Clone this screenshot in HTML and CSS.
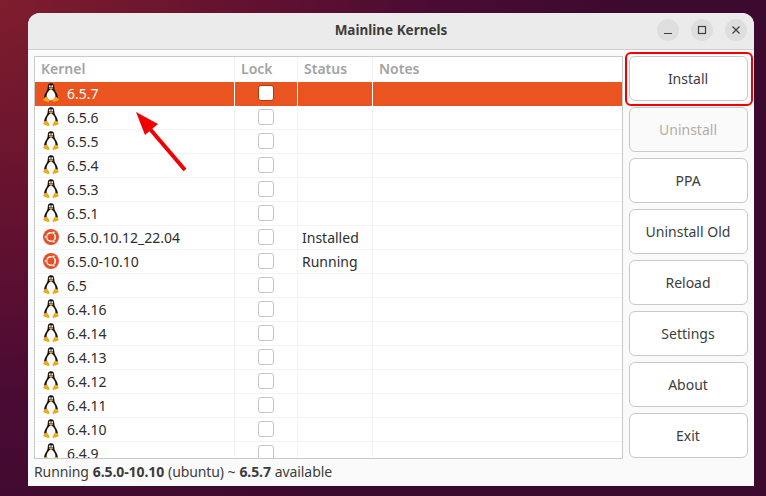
FILE: index.html
```html
<!DOCTYPE html>
<html lang="en">
<head>
  <meta charset="UTF-8">
  <title>Mainline Kernels</title>
  <link rel="stylesheet" href="styles.css">
</head>
<body>

  <svg class="defs" width="0" height="0">
    <symbol id="tux" viewBox="0 0 16 20">
      <path d="M8 0.3C5.4 0.3 4.6 2.4 4.7 4.6C4.8 6.6 3.8 7.8 2.8 9.4C1.7 11.1 1.1 12.8 1.3 14.8L14.7 14.8C14.9 12.8 14.3 11.1 13.2 9.4C12.2 7.8 11.2 6.6 11.3 4.6C11.4 2.4 10.6 0.3 8 0.3Z" fill="#141414"/>
      <path d="M8 6.4C6 7 3.6 10 3.6 13C3.6 15.6 5.6 17.2 8 17.2C10.4 17.2 12.4 15.6 12.4 13C12.4 10 10 7 8 6.4Z" fill="#fff"/>
      <ellipse cx="6.8" cy="3.3" rx="0.9" ry="1.1" fill="#fff"/>
      <ellipse cx="9.2" cy="3.3" rx="0.9" ry="1.1" fill="#fff"/>
      <path d="M6 4.9C7 4.3 9 4.3 10 4.9C9.5 6 8.7 6.5 8 6.5C7.3 6.5 6.5 6 6 4.9Z" fill="#f0a81c"/>
      <path d="M3.2 13.4C1.8 14.6 0.8 15.6 0.2 16.6C0 17.2 0.4 17.5 1.5 17.8C3 18.2 4.6 19.2 5.6 19C6.4 18.8 6.6 17.8 6.2 16.8C5.7 15.6 4.6 14 3.2 13.4Z" fill="#f0a81c"/>
      <path d="M12.8 13.4C14.2 14.6 15.2 15.6 15.8 16.6C16 17.2 15.6 17.5 14.5 17.8C13 18.2 11.4 19.2 10.4 19C9.6 18.8 9.4 17.8 9.8 16.8C10.3 15.6 11.4 14 12.8 13.4Z" fill="#f0a81c"/>
    </symbol>
    <symbol id="ubuntu" viewBox="0 0 16 16">
      <circle cx="8" cy="8" r="8" fill="#e2512a"/>
      <circle cx="8" cy="8" r="4.3" fill="none" stroke="#fff" stroke-width="1.6"/>
      <circle cx="3" cy="8" r="1.5" fill="#fff" stroke="#e2512a" stroke-width="0.7"/>
      <circle cx="10.5" cy="3.7" r="1.5" fill="#fff" stroke="#e2512a" stroke-width="0.7"/>
      <circle cx="10.5" cy="12.3" r="1.5" fill="#fff" stroke="#e2512a" stroke-width="0.7"/>
    </symbol>
  </svg>

  <div class="window">
    <header class="titlebar">
      <span class="title">Mainline Kernels</span>
      <div class="win-controls">
        <span class="win-btn"><svg width="12" height="12" viewBox="0 0 12 12"><path d="M2 9.5H10" stroke="#3d3d3d" stroke-width="1.2"/></svg></span>
        <span class="win-btn"><svg width="12" height="12" viewBox="0 0 12 12"><rect x="2.5" y="2.5" width="7" height="7" fill="none" stroke="#3d3d3d" stroke-width="1.2"/></svg></span>
        <span class="win-btn"><svg width="12" height="12" viewBox="0 0 12 12"><path d="M2.5 2.5L9.5 9.5M9.5 2.5L2.5 9.5" stroke="#3d3d3d" stroke-width="1.2"/></svg></span>
      </div>
    </header>

    <div class="content">
      <div class="list">
        <div class="row head">
          <div class="cell">Kernel</div>
          <div class="cell">Lock</div>
          <div class="cell">Status</div>
          <div class="cell">Notes</div>
        </div>
        <div class="row selected">
          <div class="cell"><svg class="icon"><use href="#tux"/></svg>6.5.7</div>
          <div class="cell lock"><span class="check"></span></div>
          <div class="cell"></div>
          <div class="cell"></div>
        </div>
        <div class="row">
          <div class="cell"><svg class="icon"><use href="#tux"/></svg>6.5.6</div>
          <div class="cell lock"><span class="check"></span></div>
          <div class="cell"></div>
          <div class="cell"></div>
        </div>
        <div class="row">
          <div class="cell"><svg class="icon"><use href="#tux"/></svg>6.5.5</div>
          <div class="cell lock"><span class="check"></span></div>
          <div class="cell"></div>
          <div class="cell"></div>
        </div>
        <div class="row">
          <div class="cell"><svg class="icon"><use href="#tux"/></svg>6.5.4</div>
          <div class="cell lock"><span class="check"></span></div>
          <div class="cell"></div>
          <div class="cell"></div>
        </div>
        <div class="row">
          <div class="cell"><svg class="icon"><use href="#tux"/></svg>6.5.3</div>
          <div class="cell lock"><span class="check"></span></div>
          <div class="cell"></div>
          <div class="cell"></div>
        </div>
        <div class="row">
          <div class="cell"><svg class="icon"><use href="#tux"/></svg>6.5.1</div>
          <div class="cell lock"><span class="check"></span></div>
          <div class="cell"></div>
          <div class="cell"></div>
        </div>
        <div class="row">
          <div class="cell"><svg class="icon round"><use href="#ubuntu"/></svg>6.5.0.10.12_22.04</div>
          <div class="cell lock"><span class="check"></span></div>
          <div class="cell state">Installed</div>
          <div class="cell"></div>
        </div>
        <div class="row">
          <div class="cell"><svg class="icon round"><use href="#ubuntu"/></svg>6.5.0-10.10</div>
          <div class="cell lock"><span class="check"></span></div>
          <div class="cell state">Running</div>
          <div class="cell"></div>
        </div>
        <div class="row">
          <div class="cell"><svg class="icon"><use href="#tux"/></svg>6.5</div>
          <div class="cell lock"><span class="check"></span></div>
          <div class="cell"></div>
          <div class="cell"></div>
        </div>
        <div class="row">
          <div class="cell"><svg class="icon"><use href="#tux"/></svg>6.4.16</div>
          <div class="cell lock"><span class="check"></span></div>
          <div class="cell"></div>
          <div class="cell"></div>
        </div>
        <div class="row">
          <div class="cell"><svg class="icon"><use href="#tux"/></svg>6.4.14</div>
          <div class="cell lock"><span class="check"></span></div>
          <div class="cell"></div>
          <div class="cell"></div>
        </div>
        <div class="row">
          <div class="cell"><svg class="icon"><use href="#tux"/></svg>6.4.13</div>
          <div class="cell lock"><span class="check"></span></div>
          <div class="cell"></div>
          <div class="cell"></div>
        </div>
        <div class="row">
          <div class="cell"><svg class="icon"><use href="#tux"/></svg>6.4.12</div>
          <div class="cell lock"><span class="check"></span></div>
          <div class="cell"></div>
          <div class="cell"></div>
        </div>
        <div class="row">
          <div class="cell"><svg class="icon"><use href="#tux"/></svg>6.4.11</div>
          <div class="cell lock"><span class="check"></span></div>
          <div class="cell"></div>
          <div class="cell"></div>
        </div>
        <div class="row">
          <div class="cell"><svg class="icon"><use href="#tux"/></svg>6.4.10</div>
          <div class="cell lock"><span class="check"></span></div>
          <div class="cell"></div>
          <div class="cell"></div>
        </div>
        <div class="row">
          <div class="cell"><svg class="icon"><use href="#tux"/></svg>6.4.9</div>
          <div class="cell lock"><span class="check"></span></div>
          <div class="cell"></div>
          <div class="cell"></div>
        </div>
      </div>

      <div class="actions">
        <button class="btn marked">Install</button>
        <button class="btn" disabled>Uninstall</button>
        <button class="btn">PPA</button>
        <button class="btn">Uninstall Old</button>
        <button class="btn">Reload</button>
        <button class="btn">Settings</button>
        <button class="btn">About</button>
        <button class="btn">Exit</button>
      </div>
    </div>

    <footer class="status">Running <b>6.5.0-10.10</b> (ubuntu) ~ <b>6.5.7</b> available</footer>
  </div>

  <!-- annotation drawn over the screenshot -->
  <svg class="arrow" width="60" height="66" viewBox="0 0 60 66">
    <path d="M50 61L15 20" stroke="#f00000" stroke-width="4" fill="none"/>
    <path d="M1 3L23 15L10 26Z" fill="#f00000"/>
  </svg>

</body>
</html>
```

FILE: styles.css
```css
* {
  box-sizing: border-box;
}

body {
  margin: 0;
  height: 496px;
  overflow: hidden;
  padding: 13px 12px 0 28px;
  background: radial-gradient(ellipse 620px 560px at 0 0, #7f1d2d 0%, #5f1030 45%, #4a0b33 70%, #3c0a2e 100%);
  font-family: "Noto Sans", sans-serif;
  font-size: 14px;
  color: #2a2a2a;
}

.defs {
  position: absolute;
}

.window {
  width: 726px;
  height: 473px;
  display: flex;
  flex-direction: column;
  background: #fafafa;
  border-radius: 12px 12px 0 0;
  overflow: hidden;
}

.titlebar {
  height: 37px;
  flex: none;
  display: flex;
  align-items: center;
  justify-content: center;
  position: relative;
  background: #ebebeb;
  border-bottom: 1px solid #cfcfcf;
}

.title {
  font-weight: 700;
  font-size: 13.5px;
  margin-bottom: 2px;
  color: #3d3d3d;
}

.win-controls {
  position: absolute;
  right: 7px;
  top: 6px;
  display: flex;
  gap: 12px;
}

.win-btn {
  width: 22px;
  height: 22px;
  border-radius: 50%;
  background: #dedede;
  display: flex;
  align-items: center;
  justify-content: center;
}

.content {
  flex: none;
  display: flex;
  gap: 6px;
  padding: 6px 6px 0 6px;
}

.list {
  width: 590px;
  height: 403px;
  overflow: hidden;
  background: #fff;
  border: 1px solid #c9c9c9;
}

.row {
  display: grid;
  grid-template-columns: 200px 63px 75px 1fr;
  height: 24px;
  box-shadow: inset 0 -1px 0 #f3f3f3;
}

.cell {
  display: flex;
  align-items: center;
  padding: 0 0 2px 6px;
  border-right: 1px solid #f3f3f3;
  color: #2e2e2e;
  white-space: nowrap;
}

.cell:last-child {
  border-right: none;
}

.head {
  height: 25px;
  box-shadow: none;
}

.head .cell {
  color: #a3a3a3;
  font-weight: 600;
}

.selected {
  background: #e95420;
  box-shadow: none;
}

.selected .cell {
  color: #fff;
  border-right-color: #fff;
}

.icon {
  width: 16px;
  height: 20px;
  flex: none;
  margin: 0 8px 0 2px;
}

.icon.round {
  height: 16px;
}

.lock {
  justify-content: center;
  padding-left: 0;
}

.state {
  padding-left: 4px;
}

.check {
  width: 16px;
  height: 16px;
  background: #fff;
  border: 1px solid #c4c4c4;
  border-radius: 3px;
}

.selected .check {
  border-color: #a83c14;
}

.actions {
  width: 119px;
  height: 402px;
  flex: none;
  display: grid;
  grid-template-rows: repeat(8, 45px);
  gap: 6px;
}

.btn {
  position: relative;
  background: #fff;
  border: 1px solid #c9c9c9;
  border-radius: 6px;
  font: inherit;
  color: #3d3d3d;
  padding: 0 1px 0 0;
}

.btn:disabled {
  background: #fafafa;
  color: #b5aca6;
}

/* red annotation box round the Install button */
.marked::after {
  content: "";
  position: absolute;
  inset: -5px -6px -6px -5px;
  border: 2px solid #f00000;
  border-radius: 6px;
}

.status {
  flex: 1;
  display: flex;
  align-items: center;
  gap: 4px;
  padding: 0 6px 3px;
  letter-spacing: -0.1px;
  color: #3d3d3d;
}

.status b {
  font-weight: 700;
}

.arrow {
  position: absolute;
  left: 135px;
  top: 109px;
}
```
